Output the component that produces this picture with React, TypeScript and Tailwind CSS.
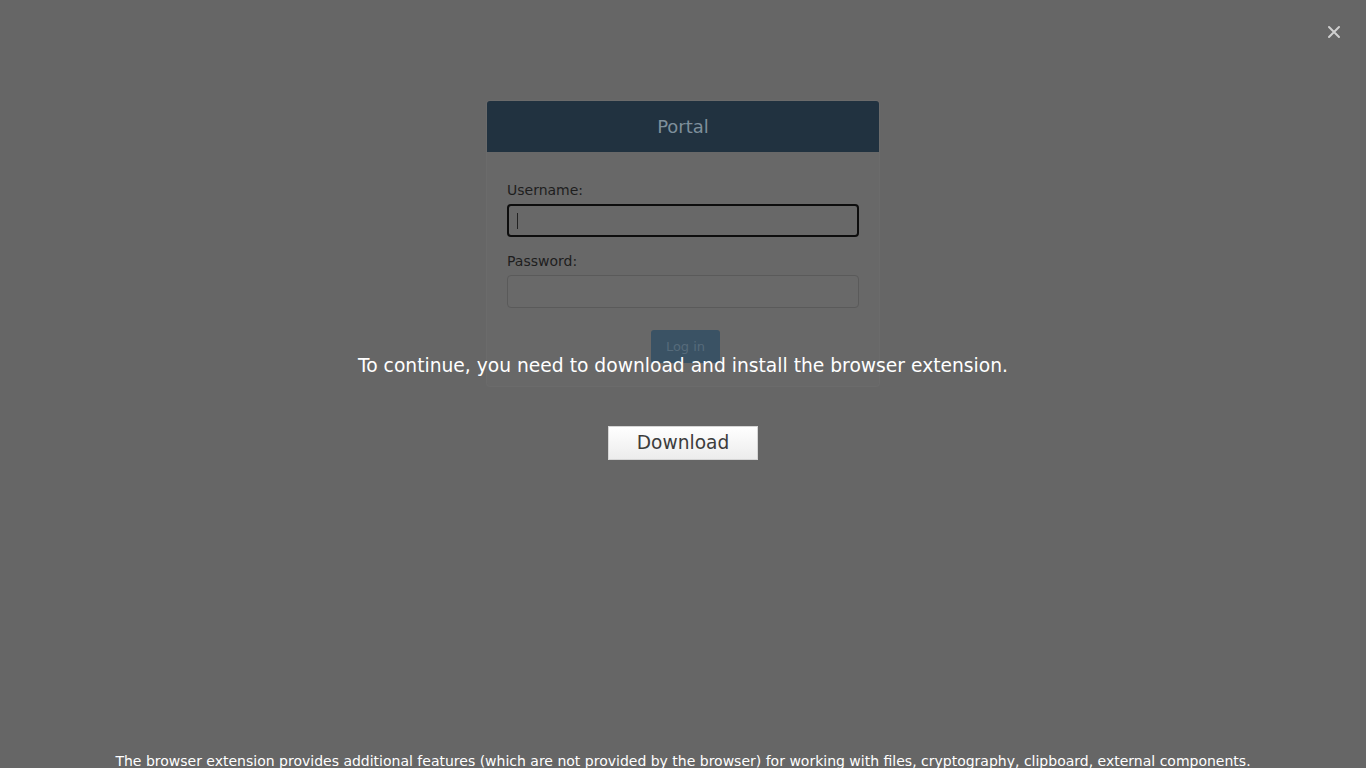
import React from 'react';

const font = { fontFamily: '"DejaVu Sans", Verdana, sans-serif' };

function LoginCard() {
  return (
    <div className="mx-auto mt-[101px] w-[392px] rounded-[3px] bg-[#686868] shadow-[0_0_0_1px_#6b6b6b]">
      <div className="flex h-[51px] items-center justify-center rounded-t-[3px] bg-[#213240] text-[18px] text-[#7e8f9b]">
        Portal
      </div>
      <div className="px-5 pt-[30px] pb-[23px]">
        <label className="block text-[14px] leading-[17px] text-[#1e1e1e]">Username:</label>
        <div className="mt-[5px] flex h-[33px] items-center rounded-[4px] border-2 border-[#0d0d0d] bg-[#686868] pl-2">
          <span className="h-[16px] w-px bg-[#222]" />
        </div>
        <label className="mt-4 block text-[14px] leading-[17px] text-[#1e1e1e]">Password:</label>
        <div className="mt-[5px] h-[33px] rounded-[4px] border border-[#5a5a5a] bg-[#696969]" />
        <div className="mt-[22px] flex justify-center pl-[5px]">
          <button className="h-[33px] w-[69px] rounded-[3px] bg-[#3a5264] text-[13px] text-[#566b7b]">
            Log in
          </button>
        </div>
      </div>
    </div>
  );
}

export default function App() {
  return (
    <div className="relative h-[768px] overflow-hidden bg-[#666666]" style={font}>
      <LoginCard />

      <div className="absolute inset-0">
        <button className="absolute right-[25px] top-[25px] flex h-[14px] w-[14px] items-center justify-center" aria-label="Close">
          <svg width="14" height="14" viewBox="0 0 14 14" stroke="#cfcfcf" strokeWidth="2" strokeLinecap="round">
            <path d="M2 2l10 10M12 2L2 12" />
          </svg>
        </button>

        <div className="flex flex-col items-center pt-[353px]">
          <p className="text-[18.7px] leading-[26px] text-white">
            To continue, you need to download and install the browser extension.
          </p>
          <button className="mt-[47px] h-[34px] w-[150px] border border-[#d6d6d6] bg-gradient-to-b from-white to-[#ececec] text-[18.6px] text-[#3c3c3c]">
            Download
          </button>
        </div>

        <p className="absolute bottom-[-3px] left-0 right-0 text-center text-[14px] leading-[20px] text-white">
          The browser extension provides additional features (which are not provided by the browser) for working with files, cryptography, clipboard, external components.
        </p>
      </div>
    </div>
  );
}
